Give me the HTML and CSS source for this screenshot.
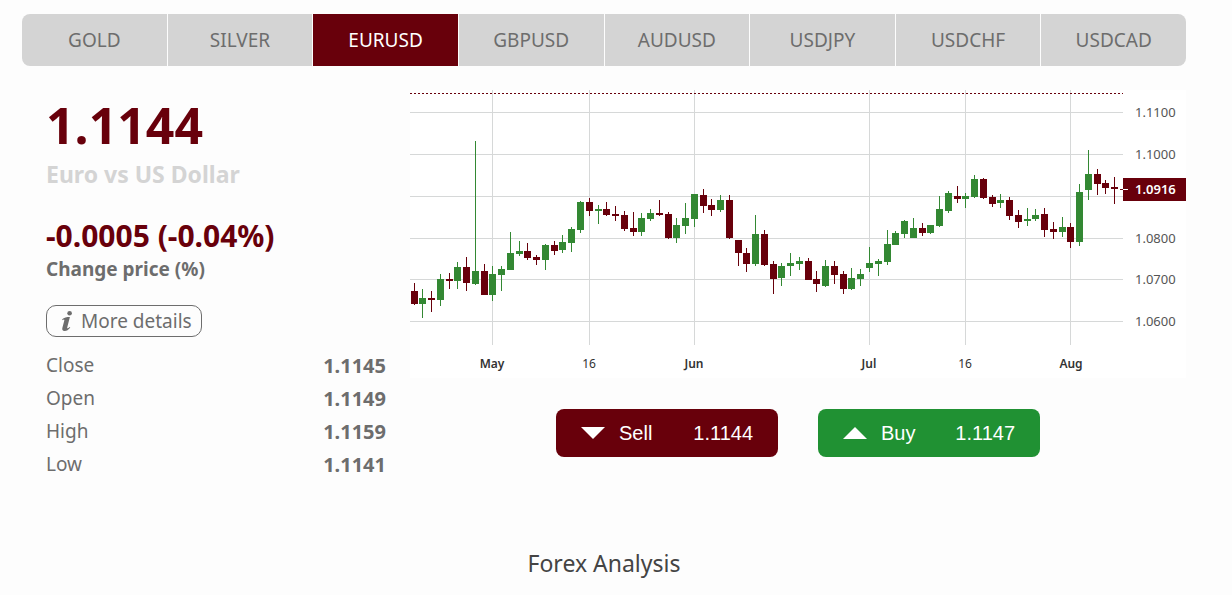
FILE: index.html
```html
<!DOCTYPE html>
<html lang="en">
<head>
<meta charset="utf-8">
<title>Forex Analysis</title>
<link rel="stylesheet" href="styles.css">
</head>
<body>
<main class="page">
  <nav class="tabs" aria-label="Instruments">
    <button class="tab" type="button">GOLD</button>
    <button class="tab" type="button">SILVER</button>
    <button class="tab tab-active" type="button" aria-current="true">EURUSD</button>
    <button class="tab" type="button">GBPUSD</button>
    <button class="tab" type="button">AUDUSD</button>
    <button class="tab" type="button">USDJPY</button>
    <button class="tab" type="button">USDCHF</button>
    <button class="tab" type="button">USDCAD</button>
  </nav>

  <div class="content">
    <section class="quote">
      <p class="price">1.1144</p>
      <p class="pair">Euro vs US Dollar</p>
      <p class="change">-0.0005 (-0.04%)</p>
      <p class="change-label">Change price (%)</p>
      <button class="details" type="button">
        <svg class="info" viewBox="0 0 12 20" aria-hidden="true">
          <circle cx="8.6" cy="2.3" r="2.3"/>
          <path d="M1.2 8.2C3 6.5 5.6 6 8.9 6L6.2 16.4C5.9 17.6 6.7 17.8 8.5 15.9L9.3 16.5C7.5 18.9 5.6 20 3.7 20C1.4 20 .9 18.6 1.4 16.7L3.3 9.5C3.6 8.2 2.7 8.2 1.5 9.2Z"/>
        </svg>
        More details
      </button>
      <table class="stats">
        <tbody>
          <tr><th scope="row">Close</th><td>1.1145</td></tr>
          <tr><th scope="row">Open</th><td>1.1149</td></tr>
          <tr><th scope="row">High</th><td>1.1159</td></tr>
          <tr><th scope="row">Low</th><td>1.1141</td></tr>
        </tbody>
      </table>
    </section>

    <section class="market">
      <svg class="chart" viewBox="410 90 776 288" role="img" aria-label="EURUSD daily candlestick chart">
        <path class="grid" d="M410 112.5H1123M410 154.5H1123M410 196.5H1123M410 238.5H1123M410 279.5H1123M410 321.5H1123M492.5 90V345M589.5 90V345M694.5 90V345M869.5 90V345M965.5 90V345M1070.5 90V345"/>
        <path class="ask" d="M410 93.5H1123"/>
        <g id="candles"></g>
        <path class="last" d="M1120 189.5H1128"/>
        <rect class="flag" x="1123" y="178" width="63" height="23"/>
        <path class="tick" d="M1123 189.5H1128"/>
        <g class="scale">
          <text x="1135" y="117">1.1100</text>
          <text x="1135" y="159">1.1000</text>
          <text class="flag-text" x="1135" y="194">1.0916</text>
          <text x="1135" y="243">1.0800</text>
          <text x="1135" y="284">1.0700</text>
          <text x="1135" y="326">1.0600</text>
        </g>
        <g class="dates">
          <text class="month" x="492" y="368">May</text>
          <text x="589" y="368">16</text>
          <text class="month" x="694" y="368">Jun</text>
          <text class="month" x="869" y="368">Jul</text>
          <text x="965" y="368">16</text>
          <text class="month" x="1071" y="368">Aug</text>
        </g>
      </svg>
      <div class="trade">
        <button class="deal deal-sell" type="button">
          <svg class="arrow" viewBox="0 0 24 12" aria-hidden="true"><path d="M0 0H24L12 12Z"/></svg>
          <span>Sell</span><span class="rate">1.1144</span>
        </button>
        <button class="deal deal-buy" type="button">
          <svg class="arrow" viewBox="0 0 24 12" aria-hidden="true"><path d="M0 12H24L12 0Z"/></svg>
          <span>Buy</span><span class="rate">1.1147</span>
        </button>
      </div>
    </section>
  </div>

  <h2 class="heading">Forex Analysis</h2>
</main>
<script src="chart.js"></script>
</body>
</html>
```

FILE: chart.js
```js
// Each candle: left edge of wick, high, low, body top, body bottom, direction (1 up, 0 down)
const candles = [
  [414,283,305,291,304,0],[422,289,318,298,304,1],[431,291,312,298,300,0],[440,274,306,279,300,1],
  [449,273,289,279,281,0],[457,262,289,267,281,1],[466,257,291,267,283,0],[475,141,285,271,284,1],
  [484,264,295,271,295,0],[492,266,301,274,295,1],[501,266,291,269,275,1],[510,232,270,253,270,1],
  [519,241,256,251,254,1],[527,243,260,251,258,0],[536,255,265,257,260,0],[545,244,270,245,260,1],
  [554,241,255,245,251,0],[562,235,253,242,250,1],[571,227,252,229,243,1],[580,201,233,202,230,1],
  [589,198,216,202,211,0],[598,205,224,209,211,1],[606,202,216,209,215,0],[615,206,221,214,216,0],
  [624,211,231,215,229,0],[633,212,236,228,232,0],[641,213,236,218,232,1],[650,209,221,213,219,1],
  [659,200,216,213,215,0],[668,212,239,214,238,0],[676,218,243,225,238,1],[685,203,234,218,226,1],
  [694,194,227,194,219,1],[703,189,213,195,206,0],[711,199,216,205,210,0],[720,195,212,200,210,1],
  [729,195,239,200,238,0],[738,240,266,240,253,0],[746,248,272,253,264,0],[755,215,266,234,264,1],
  [764,230,266,234,265,0],[773,261,294,264,279,0],[781,263,286,266,278,1],[790,253,276,263,266,1],
  [799,257,270,261,264,1],[808,258,280,261,280,0],[816,271,292,279,284,0],[825,260,287,266,286,1],
  [834,261,284,266,275,0],[843,271,294,274,289,0],[851,268,290,278,289,1],[860,269,286,274,279,1],
  [869,247,272,263,268,1],[878,259,276,261,264,1],[887,230,265,244,262,1],[895,231,245,233,245,1],
  [904,220,238,221,234,1],[913,218,238,228,238,1],[922,223,236,228,233,0],[930,225,234,225,233,1],
  [939,196,227,209,226,1],[948,191,213,193,211,1],[957,186,203,196,199,0],[965,193,208,196,199,1],
  [974,175,198,179,197,1],[983,178,199,179,198,0],[992,195,207,197,204,0],[1000,194,208,200,203,1],
  [1009,197,220,200,216,0],[1018,210,228,215,222,0],[1027,208,226,219,221,1],[1035,209,221,215,219,1],
  [1044,208,237,214,230,0],[1053,222,239,229,232,0],[1062,217,237,227,232,1],[1070,223,248,227,242,0],
  [1079,184,246,192,242,1],[1088,150,200,174,190,1],[1097,169,195,174,184,0],[1105,180,194,183,188,0],
  [1114,177,204,187,189,0]
];

const layer = document.getElementById("candles");
for (const [x, high, low, top, bottom, up] of candles) {
  const path = document.createElementNS("http://www.w3.org/2000/svg", "path");
  path.setAttribute("class", up ? "up" : "down");
  path.setAttribute("d", `M${x} ${high}h1V${low}h-1ZM${x - 3} ${top}h7V${bottom}h-7Z`);
  layer.append(path);
}
```

FILE: styles.css
```css
* { box-sizing: border-box; }

body {
  margin: 0;
  background: #fdfdfd;
  color: #6d6d6d;
  font-family: "Noto Sans", "Open Sans", sans-serif;
  font-size: 19px;
}

p, h2 { margin: 0; }

button {
  font: inherit;
  color: inherit;
  cursor: pointer;
}

.page { padding: 14px 46px 0 22px; }

.tabs {
  display: flex;
  gap: 1px;
  border-radius: 8px;
  overflow: hidden;
}

.tab {
  flex: 1 1 0;
  height: 52px;
  padding: 0;
  border: 0;
  background: #d4d4d4;
}

.tab-active { background: #68000b; color: #fff; }

.content {
  display: grid;
  grid-template-columns: 340px 1fr;
  gap: 24px;
  padding: 24px 0 0 24px;
}

.quote { display: flex; flex-direction: column; align-items: flex-start; }

.price {
  color: #68000b;
  font-size: 50px;
  font-weight: 700;
  line-height: 70px;
}

.pair {
  color: #d4d4d4;
  font-size: 23px;
  font-weight: 700;
  line-height: 28px;
}

.change {
  margin-top: 32px;
  color: #68000b;
  font-size: 30px;
  font-weight: 700;
  line-height: 32px;
}

.change-label { font-weight: 700; line-height: 34px; }

.details {
  display: flex;
  align-items: center;
  gap: 8px;
  height: 32px;
  margin-top: 19px;
  padding: 0 9px 0 14px;
  border: 1px solid #6d6d6d;
  border-radius: 10px;
  background: transparent;
}

.info { width: 12px; height: 20px; fill: #6d6d6d; }

.stats {
  width: 100%;
  margin-top: 12px;
  border-collapse: collapse;
  line-height: 33px;
}

.stats th { padding: 0; font-weight: 400; text-align: left; }
.stats td { padding: 0; font-size: 20px; font-weight: 700; text-align: right; }

.chart { display: block; width: 100%; background: #fff; }
.grid { fill: none; stroke: #d6d8d8; }
.ask { stroke: #68000b; stroke-dasharray: 2 2; }
.last { stroke: #68000b; }
.tick { stroke: #fff; }
.flag { fill: #68000b; }
.up { fill: #338833; }
.down { fill: #68000b; }

.scale { font-size: 13px; fill: #555; }
.flag-text { fill: #fff; font-weight: 600; }
.dates { font-size: 12px; fill: #333; text-anchor: middle; }
.month { font-weight: 600; }

.trade {
  display: flex;
  justify-content: center;
  gap: 40px;
  margin-top: 31px;
}

.deal {
  display: flex;
  align-items: center;
  gap: 14px;
  width: 222px;
  height: 48px;
  padding: 0 25px;
  border: 0;
  border-radius: 8px;
  color: #fff;
  font-family: "Liberation Sans", Arial, sans-serif;
  font-size: 20px;
}

.deal-sell { background: #68000b; }
.deal-buy { background: #209133; }
.arrow { width: 24px; height: 12px; fill: #fff; }
.rate { margin-left: auto; }

.heading {
  margin-top: 64px;
  color: #444;
  font-size: 23px;
  font-weight: 400;
  line-height: 36px;
  text-align: center;
}
```
